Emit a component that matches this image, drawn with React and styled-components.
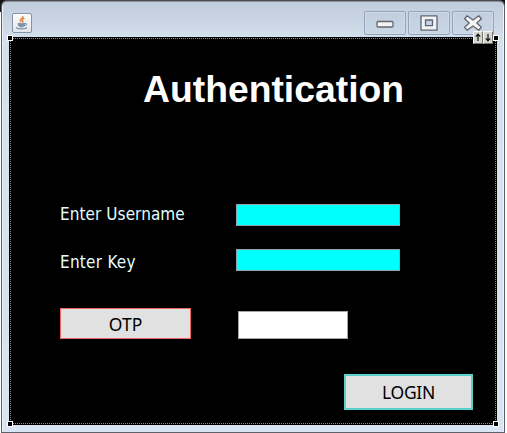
import React from "react";
import styled, { createGlobalStyle } from "styled-components";

const GlobalStyle = createGlobalStyle`
  * { box-sizing: border-box; }
  body { margin: 0; background: #fff; overflow: hidden; }
`;

const Desktop = styled.div`
  width: 505px;
  height: 433px;
  padding-left: 1px;
  background: linear-gradient(#141418 0 12px, #fff 12px);
`;

const Window = styled.div`
  width: 504px;
  height: 433px;
  display: flex;
  flex-direction: column;
  border: 1px solid #5c6068;
  border-top-color: #4c4a52;
  border-radius: 6px 6px 0 0;
  background: linear-gradient(#bfccdb 0, #cbd7e5 22px, #d4e0ee 40px, #d8e4f1 100%);
  box-shadow: inset 0 1px #8b8d98, inset 1px 0 #e8f0f7, inset -1px 0 #eff5fa;
`;

const TitleBar = styled.header`
  height: 36px;
  flex: none;
  display: flex;
  justify-content: space-between;
  align-items: flex-start;
  padding: 10px 10px 0 10px;
`;

const AppIcon = styled.span`
  display: block;
  width: 20px;
  height: 20px;
  margin-top: 2px;
  border: 1px solid #8493a6;
  border-radius: 2px;
  background: linear-gradient(#fdfdfd, #e2e6ea);
  svg { display: block; }
`;

const Controls = styled.div`
  display: flex;
  gap: 2px;
`;

const ControlButton = styled.button`
  width: 42px;
  height: 24px;
  padding: 0;
  border: 1px solid #94a5bd;
  border-radius: 2px;
  background: linear-gradient(#c1cedd, #cbd7e5);
  box-shadow: inset 0 0 0 1px #cfdae8;
  svg { display: block; }
`;

const Panel = styled.main`
  position: relative;
  width: 488px;
  height: 388px;
  flex: none;
  margin-left: 7px;
  padding: 0 24px 0 51px;
  background: #000;
`;

const Selection = styled.div`
  position: absolute;
  inset: 1px;
  border: 1px dotted #8f8f8f;
  pointer-events: none;
`;

const Handle = styled.i`
  position: absolute;
  width: 6px;
  height: 6px;
  border: 1px solid #fff;
  background: #000;
  ${(p) => (p.$bottom ? "bottom: -2px;" : "top: -2px;")}
  ${(p) => (p.$right ? "right: -2px;" : "left: -2px;")}
`;

const Reorder = styled.div`
  position: absolute;
  top: -6px;
  left: 464px;
  display: flex;
`;

const ArrowKey = styled.span`
  width: 10px;
  height: 13px;
  background: #d8d6d0;
  border: 1px solid;
  border-color: #f7f6f2 #77756e #77756e #f7f6f2;
  svg { display: block; }
`;

const Heading = styled.h1`
  height: 102px;
  margin: 0;
  padding: 30px 0 0 83px;
  font: bold 37.3px/44px "Liberation Sans", Arial, sans-serif;
  color: #fff;
  white-space: nowrap;
`;

const Fields = styled.div`
  display: grid;
  row-gap: 23px;
  padding-top: 65px;
`;

const Field = styled.label`
  display: grid;
  grid-template-columns: 176px 164px;
  height: 22px;
`;

const Caption = styled.span`
  font: 17px/20px "DejaVu Sans Condensed", "DejaVu Sans", sans-serif;
  letter-spacing: ${(p) => p.$tracking || 0}px;
  padding-top: ${(p) => p.$drop || 0}px;
  color: #e4ffff;
  white-space: nowrap;
`;

const TextInput = styled.input`
  display: block;
  width: ${(p) => p.$width}px;
  height: ${(p) => p.$height}px;
  padding: 0 4px;
  border: 1px solid ${(p) => p.$edge || "#8fa5a5"};
  border-radius: 0;
  background: ${(p) => p.$fill};
  outline: none;
`;

const OtpRow = styled.div`
  display: flex;
  align-items: flex-end;
  gap: 47px;
  height: 68px;
  padding-top: 37px;
`;

const ActionButton = styled.button`
  width: ${(p) => p.$width}px;
  height: ${(p) => p.$height}px;
  padding: 0;
  border: ${(p) => p.$border};
  background: #e1e1e1;
  color: #000;
  font: 17.5px/20px "Noto Sans", sans-serif;
  letter-spacing: ${(p) => p.$tracking}px;
`;

const Footer = styled.div`
  display: flex;
  justify-content: flex-end;
  padding-top: 35px;
`;

function JavaIcon() {
  return (
    <AppIcon>
      <svg width="18" height="18" viewBox="0 0 18 18" fill="none">
        <path d="M9.6 2.2c1.5 1.8-3.4 2.7-2.3 4.5l1 1.5M11.4 4.2c-1.9.8-2.8 1.5-1.7 2.7.5.6 0 1.2-.5 1.5" stroke="#e08a47" strokeWidth="1.5" />
        <path d="M5 9.4h7c0 2-1 3.6-3.5 3.6S5 11.4 5 9.4z" fill="#8da0b4" stroke="#708aa4" strokeWidth=".8" />
        <path d="M5.4 10.9h6M12 9.6c2.4-.6 2.3 1.6-.3 2.2" stroke="#708aa4" />
        <path d="M4.3 13.3c-2 1.2 1.7 1.6 4.2 1.5 2.6 0 6-.4 4.5-1.5" stroke="#718ba6" strokeWidth="1.2" />
      </svg>
    </AppIcon>
  );
}

function WindowGlyph({ kind }) {
  return (
    <svg width="40" height="22" viewBox="0 0 40 22">
      {kind === "min" && <rect x="12" y="9.5" width="16" height="5.5" rx="1" fill="#f5f5f5" stroke="#5f6672" strokeWidth="1.3" />}
      {kind === "max" && (
        <path d="M12 3.8h16v14.4H12zM16.5 8v5.7h7V8z" fill="#f2f3f4" fillRule="evenodd" stroke="#5f6672" strokeWidth="1.3" strokeLinejoin="round" />
      )}
      {kind === "close" && (
        <path d="M14.2 3.8 20 8l5.8-4.2 2.6 2.9-4.6 4.3 4.6 4.3-2.6 2.9L20 14l-5.8 4.2-2.6-2.9 4.6-4.3-4.6-4.3z" fill="#f4f4f4" stroke="#5f6672" strokeWidth="1.3" strokeLinejoin="round" />
      )}
    </svg>
  );
}

function Arrow({ down }) {
  return (
    <ArrowKey>
      <svg width="8" height="11" viewBox="0 0 8 11">
        <path d={down ? "M4 2v7M1.8 6.3 4 8.8l2.2-2.5" : "M4 9V2.2M1.8 4.7 4 2.2l2.2 2.5"} fill="none" stroke="#111" strokeWidth="1.2" />
      </svg>
    </ArrowKey>
  );
}

export default function App() {
  return (
    <>
      <GlobalStyle />
      <Desktop>
        <Window>
          <TitleBar>
            <JavaIcon />
            <Controls>
              <ControlButton aria-label="Minimize"><WindowGlyph kind="min" /></ControlButton>
              <ControlButton aria-label="Maximize"><WindowGlyph kind="max" /></ControlButton>
              <ControlButton aria-label="Close"><WindowGlyph kind="close" /></ControlButton>
            </Controls>
          </TitleBar>
          <Panel>
            <Heading>Authentication</Heading>
            <Fields>
              <Field>
                <Caption $tracking={0.07}>Enter Username</Caption>
                <TextInput $width={164} $height={22} $fill="#00ffff" />
              </Field>
              <Field>
                <Caption $drop={3} $tracking={0.25}>Enter Key</Caption>
                <TextInput $width={164} $height={22} $fill="#00ffff" />
              </Field>
            </Fields>
            <OtpRow>
              <ActionButton $width={131} $height={31} $border="1px solid #f06464" $tracking={0}>OTP</ActionButton>
              <TextInput $width={110} $height={28} $fill="#fff" $edge="#a5a5a5" />
            </OtpRow>
            <Footer>
              <ActionButton $width={129} $height={36} $border="2px solid #58cfca" $tracking={-0.3}>LOGIN</ActionButton>
            </Footer>
            <Selection />
            <Handle />
            <Handle $right />
            <Handle $bottom />
            <Handle $bottom $right />
            <Reorder>
              <Arrow />
              <Arrow down />
            </Reorder>
          </Panel>
        </Window>
      </Desktop>
    </>
  );
}
